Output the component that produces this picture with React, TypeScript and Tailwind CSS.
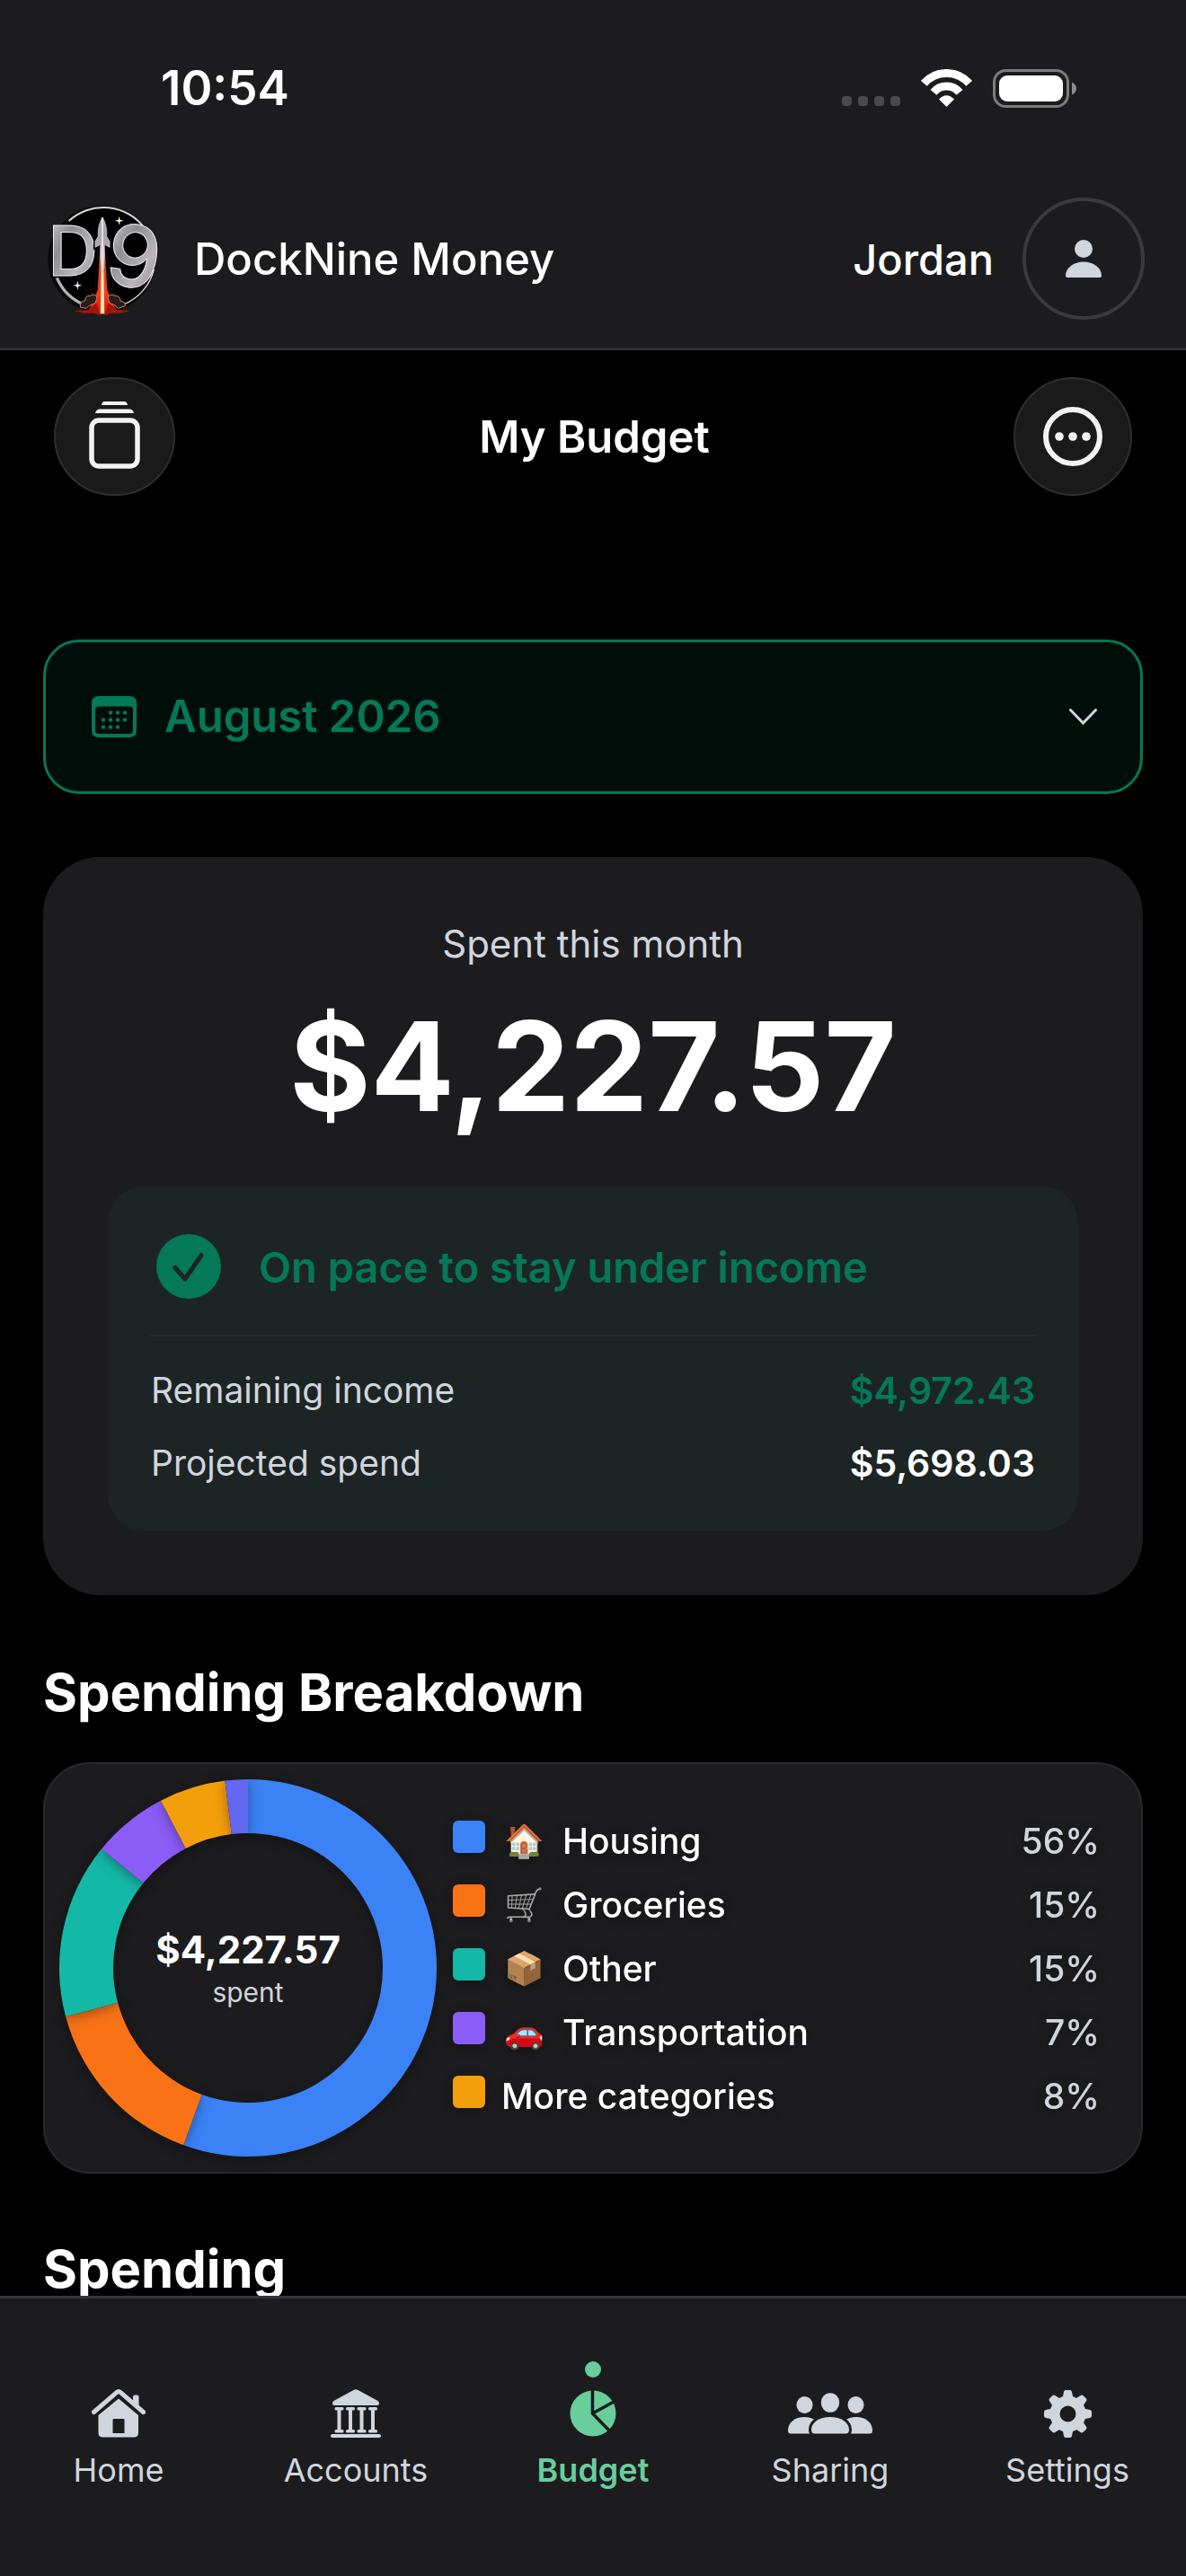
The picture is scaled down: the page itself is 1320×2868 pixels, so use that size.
import type { ReactNode } from "react";
import clsx from "clsx";

interface Slice {
  color: string;
  from: number;
  to: number;
}

interface LegendItem {
  label: string;
  emoji?: string;
  percent: string;
  swatch: string;
}

interface Tab {
  label: string;
  icon: ReactNode;
  active?: boolean;
}

// Angles in degrees, clockwise from the top
const slices: Slice[] = [
  { color: "#3b82f6", from: 0, to: 200 },
  { color: "#f97316", from: 200, to: 255 },
  { color: "#14b8a6", from: 255, to: 309 },
  { color: "#8b5cf6", from: 309, to: 332.5 },
  { color: "#f59e0b", from: 332.5, to: 353 },
  { color: "#6366f1", from: 353, to: 360 },
];

const legend: LegendItem[] = [
  { label: "Housing", emoji: "🏠", percent: "56%", swatch: "bg-[#3b82f6]" },
  { label: "Groceries", emoji: "🛒", percent: "15%", swatch: "bg-[#f97316]" },
  { label: "Other", emoji: "📦", percent: "15%", swatch: "bg-[#14b8a6]" },
  { label: "Transportation", emoji: "🚗", percent: "7%", swatch: "bg-[#8b5cf6]" },
  { label: "More categories", percent: "8%", swatch: "bg-[#f59e0b]" },
];

const tabs: Tab[] = [
  { label: "Home", icon: <HomeIcon /> },
  { label: "Accounts", icon: <BankIcon /> },
  { label: "Budget", icon: <PieIcon />, active: true },
  { label: "Sharing", icon: <PeopleIcon /> },
  { label: "Settings", icon: <GearIcon /> },
];

function HomeIcon() {
  return (
    <svg width="60" height="54" viewBox="0 0 60 54" fill="currentColor">
      <path d="M46 18V8.500Q46 6.500 48 6.500H50.500Q52.500 6.500 52.500 8.500V22Z" />
      <path
        d="M2.500 25.500 27.800 3.600Q30 1.800 32.200 3.600L57.500 25.500"
        fill="none"
        stroke="currentColor"
        strokeWidth="5"
        strokeLinecap="round"
      />
      <path
        fillRule="evenodd"
        d="M30 10.500 52 29V48.500Q52 53.500 47 53.500H12.500Q7.500 53.500 7.500 48.500V29ZM24.500 33Q23.500 33 23.500 34V49H36.500V34Q36.500 33 35.500 33Z"
      />
    </svg>
  );
}

function BankIcon() {
  return (
    <svg width="56" height="54" viewBox="0 0 56 54" fill="currentColor">
      <path d="M26 .8Q28 -.3 30 .8L52.500 13Q54 14 54 16 54 18 52 18H4Q2 18 2 16 2 14 3.500 13Z" />
      {[4.5, 17, 29.500, 42].map((x) => (
        <g key={x}>
          <rect x={x} y="20" width="10" height="3.500" rx="1.500" />
          <rect x={x + 3} y="21" width="4" height="27" />
          <rect x={x} y="45" width="10" height="3.500" rx="1.500" />
        </g>
      ))}
      <rect x="0" y="50" width="56" height="4" rx="2" />
    </svg>
  );
}

function PieIcon() {
  return (
    <svg width="52" height="52" viewBox="0 0 52 52">
      <circle cx="26" cy="26" r="25.500" fill="currentColor" />
      <path
        d="M25.500 0V26L45 46M25.500 26 50 12.500"
        fill="none"
        stroke="#1c1c1e"
        strokeWidth="3.500"
      />
    </svg>
  );
}

function PeopleIcon() {
  return (
    <svg width="94" height="46" viewBox="0 0 94 46" fill="currentColor">
      <ellipse cx="18.500" cy="13.500" rx="9" ry="9.500" />
      <ellipse cx="75.500" cy="13.500" rx="9" ry="9.500" />
      <path d="M0 42C0 33 8 27 18 27S36 33 36 42Q36 45.500 33 45.500H3Q0 45.500 0 42Z" />
      <path d="M58 42C58 33 66 27 76 27S94 33 94 42Q94 45.500 91 45.500H61Q58 45.500 58 42Z" />
      <path
        d="M26 41C26 33 35 27 47 27S68 33 68 41Q68 45.500 64 45.500H30Q26 45.500 26 41Z"
        stroke="#1c1c1e"
        strokeWidth="6"
      />
      <path d="M26 41C26 33 35 27 47 27S68 33 68 41Q68 45.500 64 45.500H30Q26 45.500 26 41Z" />
      <ellipse cx="47" cy="11" rx="10.200" ry="10.800" />
    </svg>
  );
}

function GearIcon() {
  return (
    <svg width="53" height="53" viewBox="0 0 53 53" fill="currentColor">
      {[0, 45, 90, 135, 180, 225, 270, 315].map((deg) => (
        <path
          key={deg}
          transform={`rotate(${deg} 26.5 26.5)`}
          d="M22 2Q22.300 0 24.300 0H28.700Q30.700 0 31 2L32 7Q33 9.500 36 11H17Q20 9.500 21 7Z"
        />
      ))}
      <circle cx="26.500" cy="26.500" r="14.500" fill="none" stroke="currentColor" strokeWidth="11" />
    </svg>
  );
}

function Logo() {
  return (
    <svg width="132" height="132" viewBox="12 6 396 396" className="overflow-visible" aria-hidden="true">
      <defs>
        <linearGradient id="steel" x1="0" y1="0" x2="1" y2="1">
          <stop offset="0" stopColor="#dcdbde" />
          <stop offset="0.350" stopColor="#8f8d92" />
          <stop offset="0.650" stopColor="#b9b7bb" />
          <stop offset="1" stopColor="#77757a" />
        </linearGradient>
        <linearGradient id="flame" x1="0" y1="0" x2="0" y2="1">
          <stop offset="0" stopColor="#e9e6e6" />
          <stop offset="0.300" stopColor="#c9543a" />
          <stop offset="0.700" stopColor="#ff3a14" />
          <stop offset="1" stopColor="#d80f05" />
        </linearGradient>
        <radialGradient id="glow" cx="0.500" cy="0.800" r="0.500">
          <stop offset="0" stopColor="#ff2a10" />
          <stop offset="0.500" stopColor="#8f1206" stopOpacity="0.700" />
          <stop offset="1" stopColor="#000" stopOpacity="0" />
        </radialGradient>
      </defs>
      <circle cx="208" cy="206" r="180" fill="#0b0b0c" />
      <circle cx="213" cy="202" r="166" fill="#000" />
      <path d="M98 78A170 170 0 0 1 352 104" fill="none" stroke="#d9d6d6" strokeWidth="6" />
      <path d="M58 268A170 170 0 0 0 150 358" fill="none" stroke="#b5b3b6" strokeWidth="10" />
      <path d="M382 240A170 170 0 0 1 278 358" fill="none" stroke="#e6d9d2" strokeWidth="4" />
      <ellipse cx="210" cy="310" rx="70" ry="84" fill="url(#glow)" />
      <g fontFamily="Inter, sans-serif" fontWeight="500" fill="url(#steel)" stroke="#e9e8ea" strokeWidth="3">
        <text x="28" y="262" fontSize="232">
          D
        </text>
        <text x="226" y="298" fontSize="284" transform="rotate(8 310 200)">
          9
        </text>
      </g>
      <path
        d="M210 66C196 84 192 108 193 132L184 148V168L196 162 182 352 210 388 238 352 224 162 236 168V148L227 132C228 108 224 84 210 66Z"
        fill="#0a0506"
        stroke="#0a0506"
        strokeWidth="8"
      />
      <path d="M203 160 194 310 168 372 210 388 252 372 226 310 217 160Z" fill="url(#flame)" />
      <path d="M208 150 203 388H217L212 150Z" fill="#ffd9a8" />
      <path
        d="M210 66C198 86 195 108 196 130L186 146V166L204 156 207 240H213L216 156 234 166V146L224 130C225 108 222 86 210 66Z"
        fill="#a9a8ac"
        stroke="#e6e6e8"
        strokeWidth="2"
      />
      <path d="M210 66V240" stroke="#fff" strokeWidth="4" />
      <g fill="#2a1a19" stroke="#b08a82" strokeWidth="3">
        <path d="M136 366Q134 346 152 344 152 326 170 328 186 318 192 334L186 352 164 362 156 370Z" />
        <path d="M286 362Q286 346 270 346 270 328 252 328 236 318 228 334L234 352 252 360 262 370Z" />
      </g>
      <path d="M114 378 164 374 190 352 200 386H150ZM304 378 256 374 230 352 220 386H270Z" fill="#a3140a" />
      <path d="M210 250V388" stroke="#fff0b8" strokeWidth="5" />
      <path d="M266 62 269 74 281 77 269 80 266 92 263 80 251 77 263 74Z" fill="#fff0dc" />
      <path d="M127 278 130 290 142 293 130 296 127 308 124 296 112 293 124 290Z" fill="#fff0dc" />
    </svg>
  );
}

function StatusBar() {
  return (
    <div className="flex h-[196px] items-center justify-between pr-[122px] pl-[179px]">
      <span className="text-[53px] leading-none font-semibold">10:54</span>
      <div className="flex items-center gap-[23px]">
        <div className="flex gap-[7px] pt-[28px]">
          <span className="size-[11px] rounded-[4px] bg-[#4a4a4c]" />
          <span className="size-[11px] rounded-[4px] bg-[#4a4a4c]" />
          <span className="size-[11px] rounded-[4px] bg-[#4a4a4c]" />
          <span className="size-[11px] rounded-[4px] bg-[#4a4a4c]" />
        </div>
        <svg width="57" height="42" viewBox="0 0 57 42" fill="none" stroke="#fff" strokeWidth="9">
          <path d="M3.300 15.900A33.500 33.500 0 0 1 53.700 15.900" />
          <path d="M14 25.800A19 19 0 0 1 43 25.800" />
          <path d="M20 33.500Q28.500 25 37 33.500L28.500 42Z" fill="#fff" stroke="none" />
        </svg>
        <svg width="93" height="43" viewBox="0 0 93 43">
          <rect x="1.500" y="1.500" width="82" height="40" rx="13" fill="none" stroke="#7c7c7d" strokeWidth="3" />
          <rect x="7" y="7" width="71" height="29" rx="9" fill="#fff" />
          <path d="M88 14.500Q93 17 93 21.500T88 28.500Z" fill="#8c8c8d" />
        </svg>
      </div>
    </div>
  );
}

function Header() {
  return (
    <header className="border-b-3 border-[#323235] bg-[#1c1c1e]">
      <StatusBar />
      <div className="flex items-center justify-between pt-6 pr-[46px] pb-[31px] pl-12">
        <a href="#home" className="flex items-center gap-9">
          <Logo />
          <span className="text-[49px] leading-none font-medium">DockNine Money</span>
        </a>
        <button type="button" className="flex items-center gap-8">
          <span className="text-[47px] leading-none font-medium">Jordan</span>
          <span className="flex size-[136px] items-center justify-center rounded-full border-4 border-[#3a3a3c] text-[#d1d5de]">
            <svg width="40" height="42" viewBox="0 0 40 42" fill="currentColor">
              <circle cx="20" cy="10" r="10" />
              <path d="M0 40C0 31 9 24.500 20 24.500S40 31 40 40Q40 42 37 42H3Q0 42 0 40Z" />
            </svg>
          </span>
        </button>
      </div>
    </header>
  );
}

function Toolbar() {
  return (
    <div className="flex items-center justify-between px-[60px] pt-[30px]">
      <button
        type="button"
        aria-label="Budgets"
        className="flex h-[132px] w-[135px] items-center justify-center rounded-full border-2 border-[#2e2e2e] bg-[#1a1a1a] pb-1"
      >
        <svg width="57" height="75" viewBox="0 0 57 75" fill="#f2f2f2">
          <path d="M14 4Q14.500 0 18 0H39Q42.500 0 43 4Z" />
          <path d="M7 13Q8 8.500 12 8.500H45Q49 8.500 50 13Z" />
          <rect x="3" y="21" width="51" height="51" rx="8" fill="none" stroke="#f2f2f2" strokeWidth="5.500" />
        </svg>
      </button>
      <h1 className="text-[49px] leading-none font-semibold">My Budget</h1>
      <button
        type="button"
        aria-label="More options"
        className="flex size-[132px] items-center justify-center rounded-full border-2 border-[#2e2e2e] bg-[#1a1a1a]"
      >
        <svg width="66" height="66" viewBox="0 0 66 66" fill="#f2f2f2">
          <circle cx="33" cy="33" r="30" fill="none" stroke="#f2f2f2" strokeWidth="6" />
          <circle cx="18" cy="33" r="4.800" />
          <circle cx="33" cy="33" r="4.800" />
          <circle cx="48" cy="33" r="4.800" />
        </svg>
      </button>
    </div>
  );
}

const calendarDots = [
  [21, 18.5],
  [29, 18.5],
  [37, 18.5],
  [13, 26.5],
  [21, 26.5],
  [29, 26.5],
  [37, 26.5],
  [13, 34.5],
  [21, 34.5],
  [29, 34.5],
];

function MonthPicker() {
  return (
    <label className="mt-40 flex h-[172px] items-center rounded-[40px] border-3 border-[#047857] bg-[#000e09] pr-12 pl-[51px] text-[#047857]">
      <svg width="50" height="46" viewBox="0 0 50 46" fill="currentColor" className="shrink-0">
        <path
          fillRule="evenodd"
          d="M8 0H42Q50 0 50 8V38Q50 46 42 46H8Q0 46 0 38V8Q0 0 8 0ZM8 11.500Q4 11.500 4 15V38Q4 42 8 42H42Q46 42 46 38V15Q46 11.500 42 11.500Z"
        />
        {calendarDots.map(([x, y]) => (
          <rect key={`${x}-${y}`} x={x - 2} y={y - 2} width="4" height="4" rx="1" />
        ))}
      </svg>
      <select
        aria-label="Month"
        defaultValue="August 2026"
        className="h-full flex-1 appearance-none bg-transparent pl-[31px] text-[49px] font-semibold outline-none"
      >
        <option>July 2026</option>
        <option>August 2026</option>
        <option>September 2026</option>
      </select>
      <svg width="31" height="18" viewBox="0 0 31 18" fill="none" className="pointer-events-none shrink-0 text-[#d1d5de]">
        <path d="M1.500 1.500 15.500 16 29.500 1.500" stroke="currentColor" strokeWidth="3" strokeLinecap="round" />
      </svg>
    </label>
  );
}

function SpentCard() {
  return (
    <section className="mt-[70px] rounded-[64px] bg-[#1c1c1e] p-18 text-center">
      <p className="text-[42px] leading-[50px] text-[#d1d5de]">Spent this month</p>
      <p className="mt-[42px] text-[138px] leading-none font-bold">$4,227.57</p>

      <div className="mt-[65px] rounded-[40px] bg-[#1c2524] px-12 pt-[47px] pb-[45px] text-left">
        <div className="flex items-center gap-9 text-[#047857]">
          <span className="flex size-[84px] items-center justify-center">
            <svg width="72" height="72" viewBox="0 0 72 72">
              <circle cx="36" cy="36" r="36" fill="currentColor" />
              <path
                d="M21 37.500 32 50 50 23.500"
                fill="none"
                stroke="#1c2524"
                strokeWidth="5"
                strokeLinecap="round"
                strokeLinejoin="round"
              />
            </svg>
          </span>
          <p className="text-[47px] leading-none font-semibold">On pace to stay under income</p>
        </div>

        <dl className="mt-[34px] flex flex-col gap-[21px] border-t-2 border-[#252f2e] pt-[30px] leading-[60px]">
          <div className="flex justify-between">
            <dt className="text-[39px] text-[#d1d5de]">Remaining income</dt>
            <dd className="text-[41px] font-semibold text-[#047857]">$4,972.43</dd>
          </div>
          <div className="flex justify-between">
            <dt className="text-[39px] text-[#d1d5de]">Projected spend</dt>
            <dd className="text-[41px] font-semibold">$5,698.03</dd>
          </div>
        </dl>
      </div>
    </section>
  );
}

function slicePath({ from, to }: Slice) {
  const point = (deg: number, r: number) => {
    const rad = (deg * Math.PI) / 180;
    return `${(210 + r * Math.sin(rad)).toFixed(2)} ${(210 - r * Math.cos(rad)).toFixed(2)}`;
  };
  const large = to - from > 180 ? 1 : 0;
  return `M${point(from, 210)}A210 210 0 ${large} 1 ${point(to, 210)}L${point(to, 150)}A150 150 0 ${large} 0 ${point(from, 150)}Z`;
}

function Donut() {
  return (
    <div className="grid size-[420px] shrink-0 place-items-center">
      <svg viewBox="0 0 420 420" className="col-start-1 row-start-1 size-full overflow-visible">
        {slices.map((slice) => (
          <path
            key={slice.color}
            d={slicePath(slice)}
            fill={slice.color}
            className="drop-shadow-[0_3px_7px_rgba(0,0,0,0.35)]"
          />
        ))}
      </svg>
      <div className="col-start-1 row-start-1 pt-1 text-center">
        <p className="text-[42px] leading-[50px] font-bold">$4,227.57</p>
        <p className="text-[30px] leading-[44px] text-[#d1d5de]">spent</p>
      </div>
    </div>
  );
}

function BreakdownCard() {
  return (
    <section className="mt-[42px] flex items-center gap-[18px] rounded-[52px] border-2 border-[#29292b] bg-[#1c1c1e] py-[17px] pr-[46px] pl-4">
      <Donut />
      <ul className="flex-1 text-[39px] leading-[71px] drop-shadow-[0_3px_6px_rgba(0,0,0,0.3)]">
        {legend.map((item) => (
          <li key={item.label} className="flex h-[71px] items-center">
            <span className={clsx("mr-[18px] mb-2 size-9 rounded-[6px]", item.swatch)} />
            {item.emoji && (
              <span className={clsx("w-17 pl-[3px] text-[36px]", item.label === "Groceries" && "grayscale")}>
                {item.emoji}
              </span>
            )}
            <span className="font-medium">{item.label}</span>
            <span className="ml-auto font-medium text-[#d1d5de]">{item.percent}</span>
          </li>
        ))}
      </ul>
    </section>
  );
}

function TabBar() {
  return (
    <nav className="grid shrink-0 grid-cols-5 border-t-3 border-[#363638] bg-[#1c1c1e] pt-[70px] pb-24">
      {tabs.map((tab) => (
        <a
          key={tab.label}
          href={`#${tab.label.toLowerCase()}`}
          aria-current={tab.active ? "page" : undefined}
          className={clsx(
            "flex flex-col items-center",
            tab.active ? "font-semibold text-[#68ce9c]" : "text-[#d1d5de]"
          )}
        >
          <span className={clsx("size-[18px] rounded-full", tab.active && "bg-[#68ce9c]")} />
          <span className="mt-[13px] flex h-[54px] items-center">{tab.icon}</span>
          <span className="mt-[14px] text-[36px] leading-[44px]">{tab.label}</span>
        </a>
      ))}
    </nav>
  );
}

export default function App() {
  return (
    <div className="flex h-screen flex-col bg-black font-['Inter',sans-serif] text-white">
      <Header />
      <main className="flex-1 overflow-hidden">
        <Toolbar />
        <div className="px-12">
          <MonthPicker />
          <SpentCard />
          <h2 className="mt-18 text-[58px] leading-[72px] font-bold">Spending Breakdown</h2>
          <BreakdownCard />
          <h2 className="mt-[70px] text-[58px] leading-[72px] font-bold">Spending</h2>
        </div>
      </main>
      <TabBar />
    </div>
  );
}
